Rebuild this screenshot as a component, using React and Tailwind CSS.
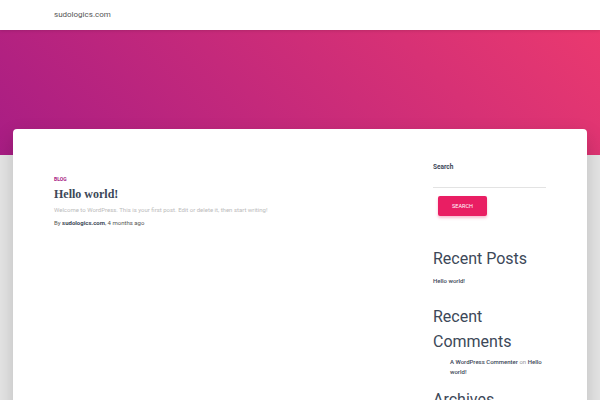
import React from "react";

export default function App() {
  return (
    <div className="min-h-[400px] h-[400px] overflow-hidden bg-[#e5e5e5] font-['Roboto',sans-serif]">
      {/* Navbar */}
      <header className="h-[30px] bg-white flex items-center pl-[54px] relative z-10 shadow-[0_1px_3px_rgba(0,0,0,0.12)]">
        <span className="text-[8px] text-[#555]">sudologics.com</span>
      </header>

      {/* Hero */}
      <div className="h-[125px] bg-[linear-gradient(45deg,#a81d84_0%,#ea396f_100%)]" />

      {/* Main card */}
      <div className="mx-[13px] -mt-[26px] relative bg-white rounded-[4px] shadow-[0_8px_20px_rgba(0,0,0,0.18)] h-[300px] flex pl-[41px] pt-[33px]">
        <div className="w-[379px] pt-[14px]">
          <div className="text-[5px] leading-[6px] font-bold text-[#a81d84] uppercase">Blog</div>
          <h2 className="mt-[3px] font-['Liberation_Serif',serif] font-bold text-[12px] leading-[18px] text-[#3c4858]">Hello world!</h2>
          <p className="mt-[2px] text-[6px] leading-[10px] text-[#bbb]">
            Welcome to WordPress. This is your first post. Edit or delete it, then start writing!
          </p>
          <p className="mt-[3px] text-[6px] leading-[10px] text-[#555]">
            By <span className="font-bold text-[#3c4858]">sudologics.com</span>, 4 months ago
          </p>
        </div>

        <aside className="w-[113px]">
          <div className="text-[6.5px] leading-[10px] font-bold text-[#3c4858]">Search</div>
          <div className="mt-[15px] border-b border-[#e3e3e3] h-px" />
          <button className="mt-[8px] ml-[5px] w-[49px] h-[20px] rounded-[2px] bg-[#e91e63] text-white text-[5.5px] uppercase shadow-[0_2px_3px_rgba(233,30,99,0.3)]">
            Search
          </button>

          <h3 className="mt-[30px] text-[16px] leading-[25px] text-[#3c4858]">Recent Posts</h3>
          <div className="mt-[5px] text-[6px] leading-[10px] font-medium text-[#3c4858]">Hello world!</div>

          <h3 className="mt-[18px] text-[16px] leading-[25px] text-[#3c4858]">Recent Comments</h3>
          <p className="mt-[3px] pl-[17px] text-[6px] leading-[10px] text-[#999]">
            <b className="font-medium text-[#3c4858]">A WordPress Commenter</b> on <b className="font-medium text-[#3c4858]">Hello world!</b>
          </p>
          <h3 className="mt-[10px] text-[16px] leading-[25px] text-[#3c4858]">Archives</h3>
        </aside>
      </div>
    </div>
  );
}
